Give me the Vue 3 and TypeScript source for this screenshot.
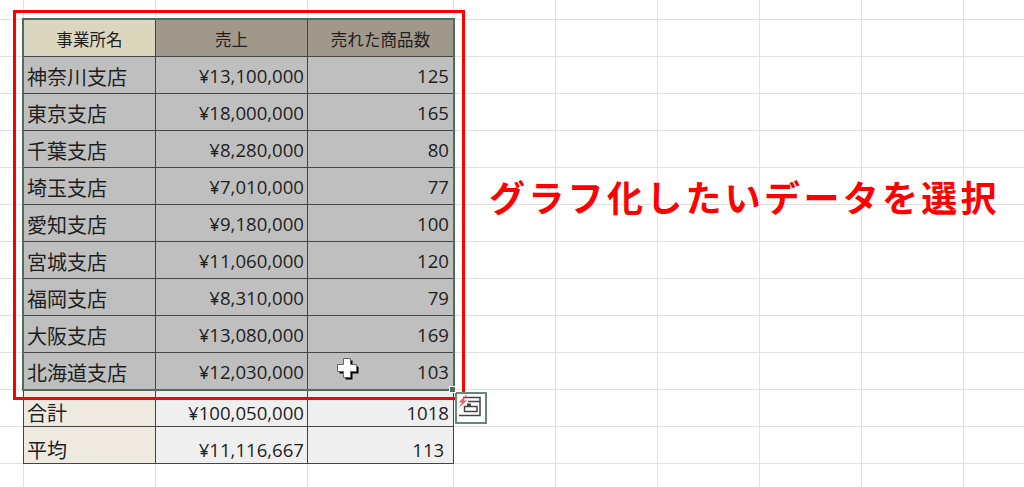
<script setup lang="ts">
interface Row { name: string; sales: string; count: string }

const rows: Row[] = [
  { name: '神奈川支店', sales: '¥13,100,000', count: '125' },
  { name: '東京支店', sales: '¥18,000,000', count: '165' },
  { name: '千葉支店', sales: '¥8,280,000', count: '80' },
  { name: '埼玉支店', sales: '¥7,010,000', count: '77' },
  { name: '愛知支店', sales: '¥9,180,000', count: '100' },
  { name: '宮城支店', sales: '¥11,060,000', count: '120' },
  { name: '福岡支店', sales: '¥8,310,000', count: '79' },
  { name: '大阪支店', sales: '¥13,080,000', count: '169' },
  { name: '北海道支店', sales: '¥12,030,000', count: '103' },
]

const emptyCols = [0, 1, 2, 3, 4, 5]
const emptyRows = 14
</script>

<template>
  <div class="sheet">
    <div class="gridlines" aria-hidden="true">
      <div v-for="n in emptyRows" :key="n" class="line-row">
        <span class="gl gutter"></span>
        <span class="gl c1"></span>
        <span class="gl c2"></span>
        <span class="gl c3"></span>
        <span v-for="c in emptyCols" :key="c" class="gl cn"></span>
      </div>
    </div>

    <div class="table-wrap">
      <div class="selected">
        <div class="row head">
          <div class="cell c1 head-a">事業所名</div>
          <div class="cell c2 head-b">売上</div>
          <div class="cell c3 head-b">売れた商品数</div>
        </div>
        <div v-for="r in rows" :key="r.name" class="row body">
          <div class="cell c1 name">{{ r.name }}</div>
          <div class="cell c2 num">{{ r.sales }}</div>
          <div class="cell c3 num">{{ r.count }}</div>
        </div>
        <span class="handle"></span>
      </div>
      <div class="row foot total">
        <div class="cell c1 name label">合計</div>
        <div class="cell c2 num value">¥100,050,000</div>
        <div class="cell c3 num value">1018</div>
      </div>
      <div class="row foot avg">
        <div class="cell c1 name label">平均</div>
        <div class="cell c2 num value">¥11,116,667</div>
        <div class="cell c3 num value">113&nbsp;</div>
      </div>
    </div>

    <div class="red-frame"></div>

    <svg class="cursor" width="24" height="24" viewBox="0 0 24 24">
      <path d="M7.5 1.5h7v6h6v7h-6v6h-7v-6h-6v-7h6z" fill="#000" transform="translate(2 2)" />
      <path d="M7.5 1.5h7v6h6v7h-6v6h-7v-6h-6v-7h6z" fill="#fff" stroke="#666" stroke-width="1" />
    </svg>

    <svg class="quick" width="32" height="32" viewBox="0 0 32 32">
      <rect x="1" y="1" width="30" height="30" fill="#fff" stroke="#66887a" stroke-width="2" />
      <path d="M8 5.5h17v18H4" fill="none" stroke="#444" stroke-width="1.5" />
      <path d="M13 9.5h12" stroke="#444" stroke-width="1.5" />
      <rect x="9.5" y="14.5" width="12.5" height="5" fill="#fff" stroke="#444" stroke-width="1.5" />
      <rect x="12" y="11.5" width="4" height="3" fill="#444" />
      <path d="M11 3 3.5 10.5H7L3.5 16 12 8.5H8.5L12 3z" fill="#e4605a" />
    </svg>

    <p class="note">グラフ化したいデータを選択</p>
  </div>
</template>

<style>
html, body { margin: 0; background: #fff; }
</style>

<style scoped>
.sheet {
  position: relative;
  width: 1024px;
  height: 487px;
  overflow: hidden;
  background: #fff;
  font-family: "Open Sans", "Noto Sans CJK JP", sans-serif;
  color: #1e1e1e;
}
.gridlines {
  position: absolute;
  inset: -17px 0 auto 0;
}
.line-row { display: flex; height: 37px; }
.gl {
  box-sizing: border-box;
  flex: none;
  height: 37px;
  border-right: 1px solid #e1e1e1;
  border-bottom: 1px solid #e1e1e1;
}
.gutter { width: 24px; }
.c1 { width: 132px; }
.c2 { width: 152px; }
.c3 { width: 146px; }
.cn { width: 102px; }

.table-wrap {
  position: relative;
  width: 431px;
  padding: 20px 0 0 23px;
}
.selected { position: relative; }
.selected::after {
  content: "";
  position: absolute;
  inset: -2px -1px -1px -1px;
  border: 2px solid #4d6e5c;
  pointer-events: none;
}
.row { display: flex; height: 37px; }
.cell {
  box-sizing: border-box;
  flex: none;
  height: 37px;
  display: flex;
  align-items: center;
  border-right: 1px solid #444;
  border-bottom: 1px solid #444;
  line-height: 1;
}
.row .c1 { width: 133px; border-left: 1px solid #444; }
.head .cell {
  justify-content: center;
  font-size: 16.5px;
  letter-spacing: 0.1px;
  font-family: "Noto Sans CJK JP", sans-serif;
  padding-top: 3px;
}
.body .cell { padding-top: 3px; }
.head-a { background: #dbd7bf; }
.head-b { background: #a0988a; }
.body .cell { background: #bfbfbf; }
.name {
  font-family: "Noto Sans CJK JP", sans-serif;
  font-size: 20px;
  padding-left: 3px;
}
.num {
  justify-content: flex-end;
  font-size: 18.6px;
}
.c2.num { padding-right: 3px; }
.c3.num { padding-right: 4px; }
.label { background: #eeeadf; }
.value { background: #efefef; }
.total .cell { padding-top: 10px; }
.avg .cell { align-items: flex-end; padding-bottom: 3px; }
.handle {
  position: absolute;
  right: -2px;
  bottom: -3px;
  width: 5px;
  height: 5px;
  background: #4d6e5c;
  border: 1px solid #fff;
  z-index: 2;
}
.red-frame {
  position: absolute;
  left: 13px;
  top: 10px;
  width: 452px;
  height: 390px;
  box-sizing: border-box;
  border: 3px solid #ff0000;
}
.cursor { position: absolute; left: 336px; top: 357px; }
.quick { position: absolute; left: 455px; top: 392px; }
.note {
  position: absolute;
  left: 489px;
  top: 171px;
  margin: 0;
  font-family: "Noto Sans CJK JP", sans-serif;
  font-weight: 700;
  font-size: 36px;
  letter-spacing: 3.3px;
  line-height: 50px;
  white-space: nowrap;
  color: #ff0000;
  text-shadow: 0 0 2px #fff, 0 0 2px #fff;
}
</style>
